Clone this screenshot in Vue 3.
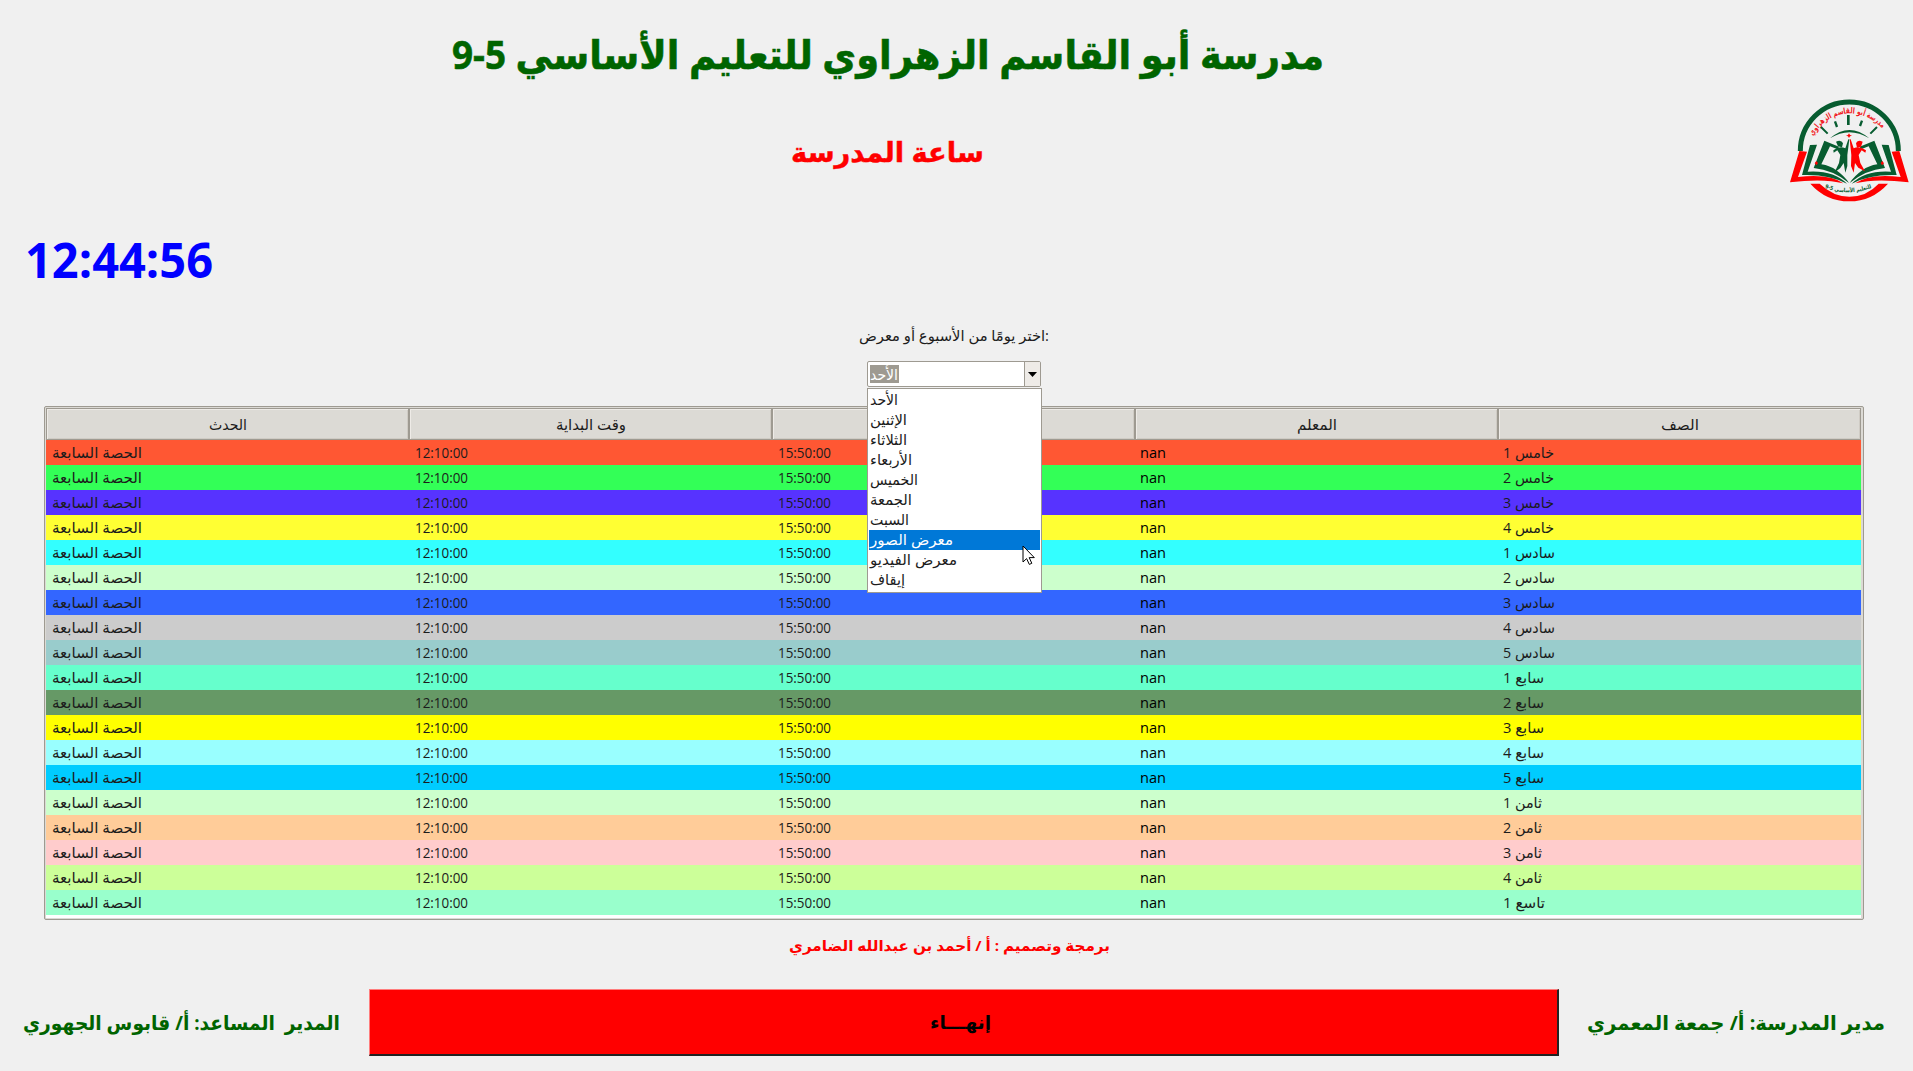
<script setup>
const vFit = {
  mounted(el, { value }) {
    const natural = el.getBoundingClientRect().width
    el.style.transform = `scaleX(${value / natural})`
    el.style.marginRight = `${value - natural}px`
  },
}

const columns = [
  { label: 'الحدث', width: 38 },
  { label: 'وقت البداية', width: 70 },
  { label: 'وقت النهاية', width: 70 },
  { label: 'المعلم', width: 40 },
  { label: 'الصف', width: 38 },
]

const rows = [
  ['خامس 1', 51, '#ff5733'],
  ['خامس 2', 51, '#33ff57'],
  ['خامس 3', 51, '#5733ff'],
  ['خامس 4', 51, '#ffff33'],
  ['سادس 1', 52, '#33ffff'],
  ['سادس 2', 52, '#ccffcc'],
  ['سادس 3', 52, '#3366ff'],
  ['سادس 4', 52, '#cccccc'],
  ['سادس 5', 52, '#99cccc'],
  ['سابع 1', 41, '#66ffcc'],
  ['سابع 2', 41, '#669966'],
  ['سابع 3', 41, '#ffff00'],
  ['سابع 4', 41, '#99ffff'],
  ['سابع 5', 41, '#00ccff'],
  ['ثامن 1', 39, '#ccffcc'],
  ['ثامن 2', 39, '#ffcc99'],
  ['ثامن 3', 39, '#ffcccc'],
  ['ثامن 4', 39, '#ccff99'],
  ['تاسع 1', 42, '#99ffcc'],
]

const options = [
  ['الأحد', 28],
  ['الإثنين', 37],
  ['الثلاثاء', 37],
  ['الأربعاء', 42],
  ['الخميس', 48],
  ['الجمعة', 42],
  ['السبت', 39],
  ['معرض الصور', 83],
  ['معرض الفيديو', 87],
  ['إيقاف', 35],
]
const active = 7
</script>

<template>
  <div class="window">
    <header class="top">
      <div class="titles">
        <h1><span v-fit="872" class="fit">مدرسة أبو القاسم الزهراوي للتعليم الأساسي 5-9</span></h1>
        <h2><span v-fit="193" class="fit">ساعة المدرسة</span></h2>
      </div>
      <svg class="logo" viewBox="0 0 429 420" width="143" height="140">
        <path d="M91 213A147 147 0 0 1 385 213" fill="none" stroke="#075c30" stroke-width="15" />
        <path d="M121 311H149Q190 350 238 350Q290 350 326 311H354Q306 364 238 364Q168 364 121 311Z" fill="#f00" />
        <path id="arc-top" d="M129 168Q166 104 238 100Q308 102 350 162" fill="none" />
        <path id="arc-bottom" d="M164 324Q236 350 306 323" fill="none" />
        <text class="arc-name"><textPath href="#arc-top" textLength="246" lengthAdjust="spacingAndGlyphs">مدرسة أبو القاسم الزهراوي</textPath></text>
        <text class="arc-kind"><textPath href="#arc-bottom" textLength="144" lengthAdjust="spacingAndGlyphs">للتعليم الأساسي 5-9</textPath></text>
        <g stroke="#075c30" fill="none">
          <path d="M235 105V135" stroke-width="8" />
          <path d="M195 124L201 141M276 122L270 138" stroke-width="7" />
          <path d="M153 141L173 161M321 141L301 161" stroke-width="6" />
        </g>
        <path d="M180 175Q238 125 298 175Q238 139 180 175Z" fill="#075c30" />
        <path d="M237 160L240 165L246 167L240 169L237 174L234 169L228 167L234 165Z" fill="#f00" />
        <g>
          <path d="M88 213L111 215L84 291Q178 280 220 310Q160 294 60 307Z" fill="#f00" />
          <path d="M120 195L141 194L113 275Q190 270 231 311Q177 282 96 285Z" fill="#075c30" />
          <path d="M163 182L207 200L203 208L180 199L154 253Q180 257 199 271Q223 288 237 309Q190 270 131 264Z" fill="#075c30" />
          <path d="M139 243L144 249L140 256L134 250Z" fill="#f00" />
        </g>
        <g transform="matrix(-1 0 0 1 476 0)">
          <path d="M88 213L111 215L84 291Q178 280 220 310Q160 294 60 307Z" fill="#f00" />
          <path d="M120 195L141 194L113 275Q190 270 231 311Q177 282 96 285Z" fill="#075c30" />
          <path d="M163 182L207 200L203 208L180 199L154 253Q180 257 199 271Q223 288 237 309Q190 270 131 264Z" fill="#075c30" />
          <path d="M139 243L144 249L140 256L134 250Z" fill="#f00" />
        </g>
        <g fill="#075c30">
          <path d="M198 185Q214 178 219 190L216 202L204 199Z" />
          <path d="M190 211Q208 197 226 205L235 178H238L232 225L232 258L226 278L221 249L211 264L193 278L207 249L211 225L202 211L191 218Z" />
        </g>
        <g fill="#f00">
          <path d="M278 185Q262 178 258 190L261 203L273 200Z" />
          <path d="M288 211Q268 197 251 205L242 178H239L244 225L243 258L251 278L255 249L265 263L285 274L271 249L266 225L275 211L286 218Z" />
        </g>
      </svg>
    </header>

    <div class="clock"><span v-fit="188" class="fit">12:44:56</span></div>

    <section class="picker">
      <label><span v-fit="190" class="fit">اختر يومًا من الأسبوع أو معرض:</span></label>
      <div class="combo">
        <div class="entry"><span class="selected"><span v-fit="28" class="fit">الأحد</span></span></div>
        <div class="arrow"><svg width="9" height="5" viewBox="0 0 9 5"><path d="M0 0H9L4.5 5Z" /></svg></div>
        <div class="menu">
          <div v-for="(o, i) in options" :key="i" class="option" :class="{ active: i === active }">
            <span v-fit="o[1]" class="fit">{{ o[0] }}</span>
          </div>
          <svg class="cursor" width="14" height="21" viewBox="0 0 14 21">
            <path d="M1 1V17L4.6 13.6L7.3 19.4L9.8 18.3L7.2 12.6H12.3Z" fill="#fff" stroke="#000" />
          </svg>
        </div>
      </div>
    </section>

    <main class="table">
      <div class="row head">
        <div v-for="c in columns" :key="c.label" class="th"><span v-fit="c.width" class="fit">{{ c.label }}</span></div>
      </div>
      <div v-for="r in rows" :key="r[0]" class="row" :style="{ background: r[2] }">
        <div class="td"><span v-fit="90" class="fit">الحصة السابعة</span></div>
        <div class="td"><span v-fit="53" class="fit">12:10:00</span></div>
        <div class="td"><span v-fit="53" class="fit">15:50:00</span></div>
        <div class="td"><span v-fit="26" class="fit nan">nan</span></div>
        <div class="td"><span v-fit="r[1]" class="fit">{{ r[0] }}</span></div>
      </div>
      <div class="rest"></div>
    </main>

    <p class="credit"><span v-fit="321" class="fit">برمجة وتصميم : أ / أحمد بن عبدالله الضامري</span></p>

    <footer class="bottom">
      <div class="person left"><span v-fit="317" class="fit">المدير&nbsp; المساعد: أ/ قابوس الجهوري</span></div>
      <button class="quit"><span v-fit="61" class="fit">إنهـــاء</span></button>
      <div class="person right"><span v-fit="298" class="fit">مدير المدرسة: أ/ جمعة المعمري</span></div>
    </footer>
  </div>
</template>

<style>
body {
  background: #f0f0f0;
}
</style>

<style scoped>
.window {
  box-sizing: border-box;
  width: 1913px;
  height: 1071px;
  overflow: hidden;
  background: #f0f0f0;
  font-family: "Open Sans", "DejaVu Sans", sans-serif;
  font-size: 15px;
  color: #1c1c1c;
}
.fit {
  display: inline-block;
  white-space: pre;
  transform-origin: 0 50%;
}
.top {
  display: flex;
  height: 221px;
}
.titles {
  width: 1770px;
}
.logo {
  margin-top: 80px;
}
h1,
h2,
p {
  margin: 0;
}
h1 {
  padding: 24px 0 0 452px;
  font-size: 40px;
  line-height: 60px;
  color: #006400;
  -webkit-text-stroke: 0.6px #006400;
}
h2 {
  padding: 47px 0 0 791px;
  font-size: 28px;
  line-height: 40px;
  color: #f00;
  -webkit-text-stroke: 0.4px #f00;
}
.arc-name {
  font: bold 25px "DejaVu Sans", sans-serif;
  fill: #f21822;
}
.arc-kind {
  font: bold 17px "DejaVu Sans", sans-serif;
  fill: #075c30;
}
.clock {
  height: 105px;
  padding-left: 25px;
  font-size: 48px;
  font-weight: 700;
  line-height: 77px;
  color: #00f;
}
.picker {
  display: flex;
  flex-direction: column;
  height: 80px;
}
.picker label {
  height: 35px;
  padding-left: 859px;
  line-height: 19px;
}
.combo {
  position: relative;
  display: flex;
  box-sizing: border-box;
  width: 174px;
  height: 26px;
  margin-left: 867px;
  border: 1px solid #9e9a91;
  border-radius: 2px;
  background: #fff;
}
.entry {
  flex: 1;
  padding: 3px 2px;
}
.selected {
  display: block;
  width: 29px;
  height: 18px;
  background: #9e9a91;
  color: #fff;
  line-height: 18px;
}
.arrow {
  display: flex;
  align-items: center;
  justify-content: center;
  width: 15px;
  border-left: 1px solid #9e9a91;
  background: #eeebe7;
}
.menu {
  position: absolute;
  z-index: 2;
  top: 26px;
  left: -1px;
  box-sizing: border-box;
  width: 175px;
  height: 205px;
  padding: 1px 1px 2px;
  border: 1px solid #9e9a91;
  background: #fff;
}
.option {
  height: 20px;
  padding-left: 1px;
  line-height: 19px;
}
.option.active {
  background: #0078d7;
  color: #fff;
}
.cursor {
  position: absolute;
  left: 154px;
  top: 156px;
}
.table {
  box-sizing: border-box;
  width: 1820px;
  height: 514px;
  margin-left: 44px;
  padding: 1px 2px 1px 1px;
  border: 1px solid #9e9a91;
  border-radius: 2px;
  background: #dcdad5;
}
.row {
  display: flex;
  width: 1815px;
  height: 25px;
}
.rest {
  height: 3px;
  background: #fff;
}
.td {
  box-sizing: border-box;
  width: 363px;
  padding-left: 6px;
  line-height: 24px;
}
.td:nth-child(n + 4) {
  padding-left: 5px;
}
.nan {
  color: #000;
}
.head {
  height: 32px;
}
.th {
  box-sizing: border-box;
  width: 363px;
  border: 1px solid #9e9a91;
  box-shadow: inset 1px 1px #eeebe7, inset -1px -1px #cfcbc4;
  background: #dcdad5;
  line-height: 31px;
  text-align: center;
}
.credit {
  height: 69px;
  padding-left: 789px;
  font-size: 15px;
  font-weight: 700;
  line-height: 51px;
  color: #f00;
}
.bottom {
  display: flex;
  align-items: center;
}
.person {
  box-sizing: border-box;
  font-size: 20px;
  font-weight: 700;
  line-height: 65px;
  color: #006400;
}
.left {
  width: 369px;
  padding-left: 23px;
}
.right {
  padding-left: 28px;
}
.quit {
  width: 1190px;
  height: 67px;
  padding: 0 6px 0 0;
  border: solid;
  border-width: 1px 2px 2px 1px;
  border-color: #ff7d7d #222 #222 #ff7d7d;
  background: #f00;
  color: #000;
  font: 700 18px "Open Sans", "DejaVu Sans", sans-serif;
}
</style>
